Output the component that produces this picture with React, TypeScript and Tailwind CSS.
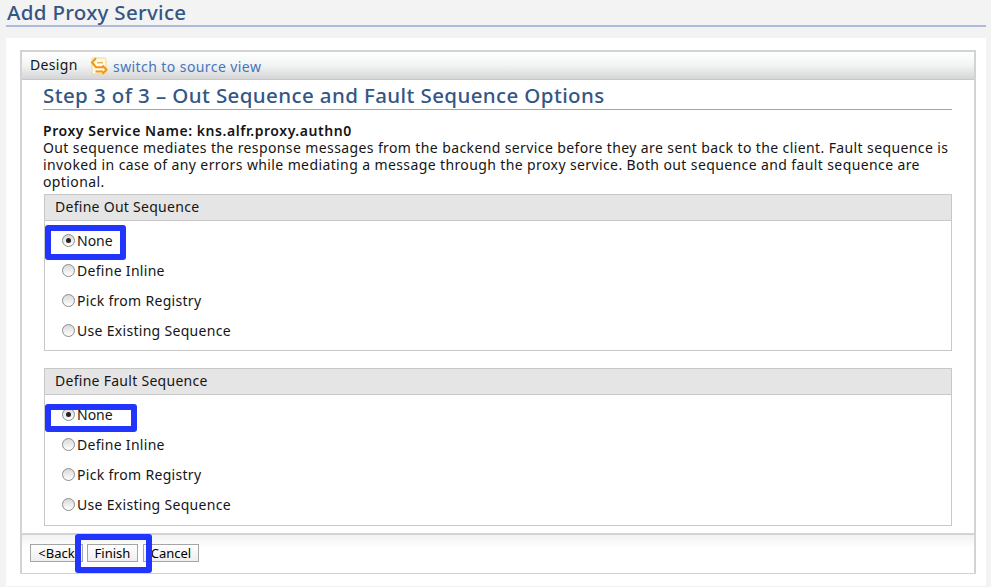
import React from "react";

const options = ["None", "Define Inline", "Pick from Registry", "Use Existing Sequence"];

function Radio({ checked }: { checked: boolean }) {
  return (
    <span className="flex h-[13px] w-[13px] shrink-0 items-center justify-center rounded-full border border-[#8c8c8c] bg-linear-to-b from-[#d8d8d8] to-white">
      {checked && <span className="h-[5px] w-[5px] rounded-full bg-[#222]" />}
    </span>
  );
}

function Section({ title, size, highlight }: { title: string; size: string; highlight: string }) {
  return (
    <section className={`relative w-[908px] border border-[#c8c8c8] bg-white ${size}`}>
      <div className="h-[26px] border-b border-[#c8c8c8] bg-[#e5e5e5] pl-[10px] leading-[23px] tracking-[0.28px]">
        {title}
      </div>
      <div className="flex flex-col pt-[5px] pl-[17px]">
        {options.map((label, i) => (
          <label key={label} className="-mt-px mb-px flex h-[30px] items-center gap-[2px]">
            <Radio checked={i === 0} />
            <span className={i === 0 ? "tracking-normal" : "tracking-[0.3px]"}>{label}</span>
          </label>
        ))}
      </div>
      <div className={`absolute border-[6px] border-[#2135ff] ${highlight}`} />
    </section>
  );
}

function Button({ children, className }: { children: React.ReactNode; className: string }) {
  return (
    <button
      className={`h-[18px] border border-[#a5a5a5] bg-linear-to-b from-white to-[#eeeeee] text-[13px] leading-[16px] whitespace-nowrap text-black ${className}`}
    >
      {children}
    </button>
  );
}

export default function App() {
  return (
    <div className="h-[587px] w-[991px] overflow-hidden bg-[#f3f3f3] pl-[6px] font-['Noto_Sans',sans-serif] text-[14px] text-[#151515]">
      <div className="h-[27px] w-[980px] border-b-2 border-[#b0bada] pl-px">
        <h1 className="text-[20.5px] leading-[25px] font-medium tracking-[0.3px] whitespace-nowrap text-[#335685]">
          Add Proxy Service
        </h1>
      </div>
      <main className="mt-[11px] h-[548px] w-[980px] bg-white pt-[12px] pl-[14px]">
        <div className="h-[524px] w-[956px] border-2 border-b-1 border-[#d3d3d3]">
          <header className="flex h-[28px] items-center border-b border-[#c8c8c8] bg-linear-to-b from-white via-[#f2f4f4] to-[#d5d5d6] pl-[8px]">
            <span className="-mt-[3px] w-[60px] tracking-[0.35px]">Design</span>
            <svg width="18" height="18" viewBox="0 0 18 18" fill="none">
              <path d="M3 1h11.500q1.500 0 1.500 1.500V16q0 1-1 1H3q-1 0-1-1V2q0-1 1-1Z" fill="#fff9e8" stroke="#efd594" />
              <path d="M6 1.200 2 5.500l4 4.700h7" stroke="#ee9718" strokeWidth="2" />
              <path d="m12.500 8.500 4 4.200-4 4M5.500 14.500H13" stroke="#ee9718" strokeWidth="2" />
              <path d="M7 5.700h6" stroke="#efb24e" strokeWidth="1.500" />
            </svg>
            <a className="mt-[2px] ml-[5px] tracking-[0.42px] whitespace-nowrap text-[#4674c0]">switch to source view</a>
          </header>
          <div className="h-[453px] pl-[21px]">
            <h2 className="h-[30px] w-[909px] border-b border-[#98a5cd] pt-[2px] text-[20.5px] leading-[26px] font-medium tracking-[0.39px] whitespace-nowrap text-[#335685]">
              Step 3 of 3 – Out Sequence and Fault Sequence Options
            </h2>
            <div className="h-[84px] pt-[12px] leading-[17px] tracking-[0.39px] whitespace-nowrap">
              <p className="font-semibold tracking-[0.55px]">Proxy Service Name: kns.alfr.proxy.authn0</p>
              <p>Out sequence mediates the response messages from the backend service before they are sent back to the client. Fault sequence is</p>
              <p>invoked in case of any errors while mediating a message through the proxy service. Both out sequence and fault sequence are</p>
              <p>optional.</p>
            </div>
            <div className="flex flex-col gap-[17px] pl-px">
              <Section
                title="Define Out Sequence"
                size="h-[157px]"
                highlight="left-0 top-[30px] h-[35px] w-[81px] rounded-[3px]"
              />
              <Section
                title="Define Fault Sequence"
                size="h-[158px]"
                highlight="left-0 top-[35px] h-[28px] w-[92px] rounded-[3px]"
              />
            </div>
          </div>
          <footer className="relative flex h-[40px] items-start border-t-2 border-[#d3d3d3] bg-linear-to-b from-[#f1f2f2] to-white to-35% pt-[9px] pl-[8px]">
            <Button className="w-[53px]">&lt;Back</Button>
            <Button className="ml-[4px] w-[51px]">Finish</Button>
            <Button className="ml-[5px] w-[56px]">Cancel</Button>
            <div className="absolute top-[-1px] left-[53px] h-[39px] w-[77px] rounded-[3px] border-[6px] border-[#2135ff]" />
          </footer>
        </div>
      </main>
    </div>
  );
}
